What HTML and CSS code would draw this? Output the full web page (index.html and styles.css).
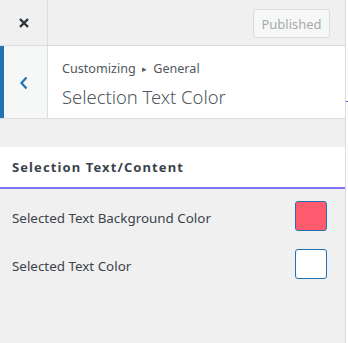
FILE: index.html
```html
<!DOCTYPE html>
<html>
<head>
<meta charset="utf-8">
<link rel="stylesheet" href="styles.css">
</head>
<body>
<div class="panel">
  <div class="topbar">
    <div class="close">
      <svg width="12" height="12" viewBox="0 0 12 12"><path d="M2 2 L10 10 M10 2 L2 10" stroke="#2c3338" stroke-width="2.4" stroke-linecap="butt"/></svg>
    </div>
    <div class="spacer"></div>
    <div class="published">Published</div>
  </div>
  <div class="sechead">
    <div class="back">
      <svg width="10" height="14" viewBox="0 0 10 14"><path d="M7.5 1.5 L2.5 7 L7.5 12.5" fill="none" stroke="#2271b1" stroke-width="2.2"/></svg>
    </div>
    <div class="titles">
      <div class="crumb">Customizing <span class="tri">&#9656;</span> General</div>
      <div class="title">Selection Text Color</div>
    </div>
    <span class="tick"></span>
  </div>
  <div class="group">Selection Text/Content</div>
  <div class="rows">
    <div class="row"><span class="label">Selected Text Background Color</span><span class="swatch pink"></span></div>
    <div class="row"><span class="label">Selected Text Color</span><span class="swatch white"></span></div>
  </div>
</div>
</body>
</html>
```

FILE: styles.css
```css
html, body { margin: 0; padding: 0; }
body { background: #fff; font-family: "Noto Sans", "Open Sans", sans-serif; }
.panel {
  width: 345px;
  height: 343px;
  background: #f0f0f1;
  border-right: 1px solid #dcdcde;
  display: flex;
  flex-direction: column;
}
.topbar {
  height: 45px;
  border-bottom: 1px solid #dcdcde;
  display: flex;
  align-items: center;
}
.close {
  width: 47px;
  height: 45px;
  border-right: 1px solid #dcdcde;
  display: flex;
  align-items: center;
  justify-content: center;
}
.close svg { margin-top: 1px; }
.spacer { flex: 1; }
.published {
  width: 75px;
  height: 27px;
  margin-right: 15px;
  margin-top: 2px;
  border: 1px solid #dcdcde;
  border-radius: 3px;
  background: #f6f7f7;
  color: #a7aaad;
  font-size: 13px;
  display: flex;
  align-items: center;
  justify-content: center;
}
.sechead {
  position: relative;
  height: 72px;
  background: #fff;
  border-bottom: 1px solid #dcdcde;
  display: flex;
}
.back {
  width: 43px;
  border-left: 4px solid #2271b1;
  border-right: 1px solid #dcdcde;
  background: #f6f7f7;
  display: flex;
  align-items: center;
  justify-content: center;
}
.back svg { margin-left: -4px; margin-top: 1px; }
.titles { padding: 14px 0 0 14px; color: #50575e; }
.crumb { font-size: 12.6px; line-height: 18px; }
.tri { font-size: 9px; margin: 0 3px; position: relative; top: -1px; }
.title { font-size: 18.4px; font-weight: 300; line-height: 28px; margin-top: 4px; }
.tick {
  position: absolute;
  right: -3px;
  top: 55px;
  width: 2px;
  height: 1px;
  background: #5b54a6;
}
.group {
  margin-top: 28px;
  height: 40px;
  background: #fff;
  border-bottom: 2px solid #7f76f5;
  padding-left: 12px;
  font-size: 13px;
  font-weight: 700;
  letter-spacing: 1.1px;
  color: #3c434a;
  display: flex;
  align-items: center;
}
.rows {
  padding: 12px 18px 0 12px;
  display: flex;
  flex-direction: column;
  gap: 18px;
}
.row {
  height: 30px;
  display: flex;
  align-items: center;
  justify-content: space-between;
}
.label { font-size: 13.4px; color: #3c434a; margin-top: 3px; }
.swatch {
  width: 30px;
  height: 28px;
  border: 1px solid #2271b1;
  border-radius: 3px;
}
.pink { background: #ff5a6e; }
.white { background: #fff; }
```
